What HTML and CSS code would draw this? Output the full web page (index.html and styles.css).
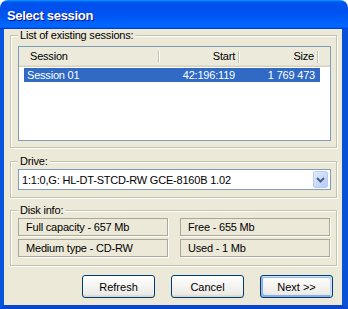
FILE: index.html
```html
<!DOCTYPE html>
<html>
<head>
  <meta name="viewport" content="width=device-width, initial-scale=1">
  <title>Select session</title>
  <link rel="stylesheet" href="styles.css">
</head>
<body>
  <div class="window">
    <div class="titlebar">
      <span class="title">Select session</span>
    </div>

    <div class="client">
      <fieldset class="group group-sessions">
        <legend>List of existing sessions:</legend>
        <div class="listview">
          <div class="lv-header">
            <div class="lv-col">Session</div>
            <div class="lv-col right">Start</div>
            <div class="lv-col right">Size</div>
            <div class="lv-col filler"></div>
          </div>
          <div class="lv-row selected">
            <div class="lv-cell">Session 01</div>
            <div class="lv-cell right">42:196:119</div>
            <div class="lv-cell right">1 769 473</div>
          </div>
        </div>
      </fieldset>

      <fieldset class="group group-drive">
        <legend>Drive:</legend>
        <div class="combo">
          <span class="combo-text">1:1:0,G: HL-DT-STCD-RW GCE-8160B 1.02</span>
          <span class="combo-btn">
            <svg width="9" height="6" viewBox="0 0 9 6"><path d="M1 1 L4.5 4.5 L8 1" fill="none" stroke="#4d6185" stroke-width="2"/></svg>
          </span>
        </div>
      </fieldset>

      <fieldset class="group group-info">
        <legend>Disk info:</legend>
        <div class="info-grid">
          <div class="info-cell">Full capacity - 657 Mb</div>
          <div class="info-cell">Free - 655 Mb</div>
          <div class="info-cell">Medium type - CD-RW</div>
          <div class="info-cell">Used - 1 Mb</div>
        </div>
      </fieldset>

      <div class="buttons">
        <button>Refresh</button>
        <button>Cancel</button>
        <button class="default">Next &gt;&gt;</button>
      </div>
    </div>
  </div>
</body>
</html>
```

FILE: styles.css
```css
body {
  margin: 0;
  background: #fff;
  font-family: "Liberation Sans", Arial, sans-serif;
  font-size: 11px;
  letter-spacing: -0.2px;
  color: #000;
}

.window {
  width: 348px;
  height: 309px;
  display: flex;
  flex-direction: column;
}

.titlebar {
  height: 29px;
  flex: none;
  display: flex;
  align-items: center;
  padding-left: 7px;
  border-radius: 8px 8px 0 0;
  background: linear-gradient(180deg, #0997ff, #0053ee 8%, #0050ee 40%, #0066ff 88%, #0066ff 93%, #005bff 95%, #003dd7 96%, #003dd7);
}

.title {
  color: #fff;
  font-weight: bold;
  font-size: 13px;
  letter-spacing: -0.3px;
  text-shadow: 1px 1px #0f1089;
  margin-top: 2px;
}

.client {
  flex: 1;
  display: flex;
  flex-direction: column;
  background: #ece9d8;
  border-left: 4px solid #0855dd;
  border-right: 6px solid #0852d8;
  border-bottom: 4px solid #0846cf;
  padding: 0 5px 7px 6px;
}

/* etched group boxes */
.group {
  margin: 0;
  padding: 0 5px 6px 7px;
  border: 1px solid #c5c2b2;
  box-shadow: 1px 1px 0 #fff, inset 1px 1px 0 #fff;
  min-width: 0;
}

.group legend {
  padding: 0 2px;
  line-height: 13px;
  background: #ece9d8;
}

.group-sessions {
  padding-top: 4px;
}

.group-drive {
  margin-top: 7px;
  padding-top: 1px;
  padding-bottom: 7px;
}

.group-info {
  margin-top: 6px;
  padding-top: 1px;
  padding-bottom: 8px;
}

.right {
  text-align: right;
}

/* list view */
.listview {
  height: 95px;
  box-sizing: border-box;
  border: 1px solid #7f9db9;
  background: #fff;
}

.lv-header {
  display: grid;
  grid-template-columns: 141px 80px 79px 1fr;
  height: 20px;
  background: #ebeadb;
  box-shadow: inset 0 -1px 0 #d6d2c2, inset 0 -2px 0 #e2decd;
}

.lv-col {
  position: relative;
  line-height: 19px;
  padding: 0 6px 0 11px;
}

.lv-col.right {
  padding: 0 5px 0 4px;
}

.lv-col::after {
  content: "";
  position: absolute;
  right: 1px;
  top: 4px;
  bottom: 4px;
  width: 1px;
  background: #c7c5b2;
  box-shadow: 1px 0 0 #fff;
}

.lv-col.filler::after {
  display: none;
}

.lv-row {
  display: grid;
  grid-template-columns: 136px 80px 80px;
  margin: 1px 0 0 5px;
  width: 296px;
  line-height: 14px;
}

.lv-row.selected {
  background: #316ac5;
  color: #fff;
}

.lv-cell {
  padding: 0 5px 0 3px;
  white-space: nowrap;
}

/* combo box */
.combo {
  display: flex;
  align-items: center;
  height: 21px;
  box-sizing: border-box;
  border: 1px solid #7f9db9;
  background: #fff;
  padding: 1px;
}

.combo-text {
  flex: 1;
  padding-left: 2px;
}

.combo-btn {
  width: 15px;
  height: 17px;
  box-sizing: border-box;
  display: flex;
  align-items: center;
  justify-content: center;
  border: 1px solid #bccbf0;
  border-radius: 2px;
  background: linear-gradient(135deg, #e0eafe, #b8ccf8);
  margin-right: 1px;
}

/* disk info */
.info-grid {
  display: grid;
  grid-template-columns: 150px 150px;
  column-gap: 12px;
  row-gap: 3px;
}

.info-cell {
  height: 18px;
  box-sizing: border-box;
  line-height: 16px;
  padding-left: 7px;
  border: 1px solid #aca899;
  box-shadow: 1px 1px 0 #fff;
}

/* buttons */
.buttons {
  display: flex;
  justify-content: flex-end;
  gap: 16px;
  margin-top: 9px;
  padding-right: 4px;
}

button {
  width: 73px;
  height: 23px;
  padding: 0;
  font: inherit;
  color: #000;
  border: 1px solid #003c74;
  border-radius: 3px;
  background: linear-gradient(180deg, #fff, #ecebe6 86%, #d6d0c5);
}

button.default {
  box-shadow: inset -1px 1px #cee7ff, inset 1px 2px #98b8ea, inset -2px 2px #bcd4f6, inset 1px -1px #89ade4, inset 2px -2px #89ade4;
}
```
